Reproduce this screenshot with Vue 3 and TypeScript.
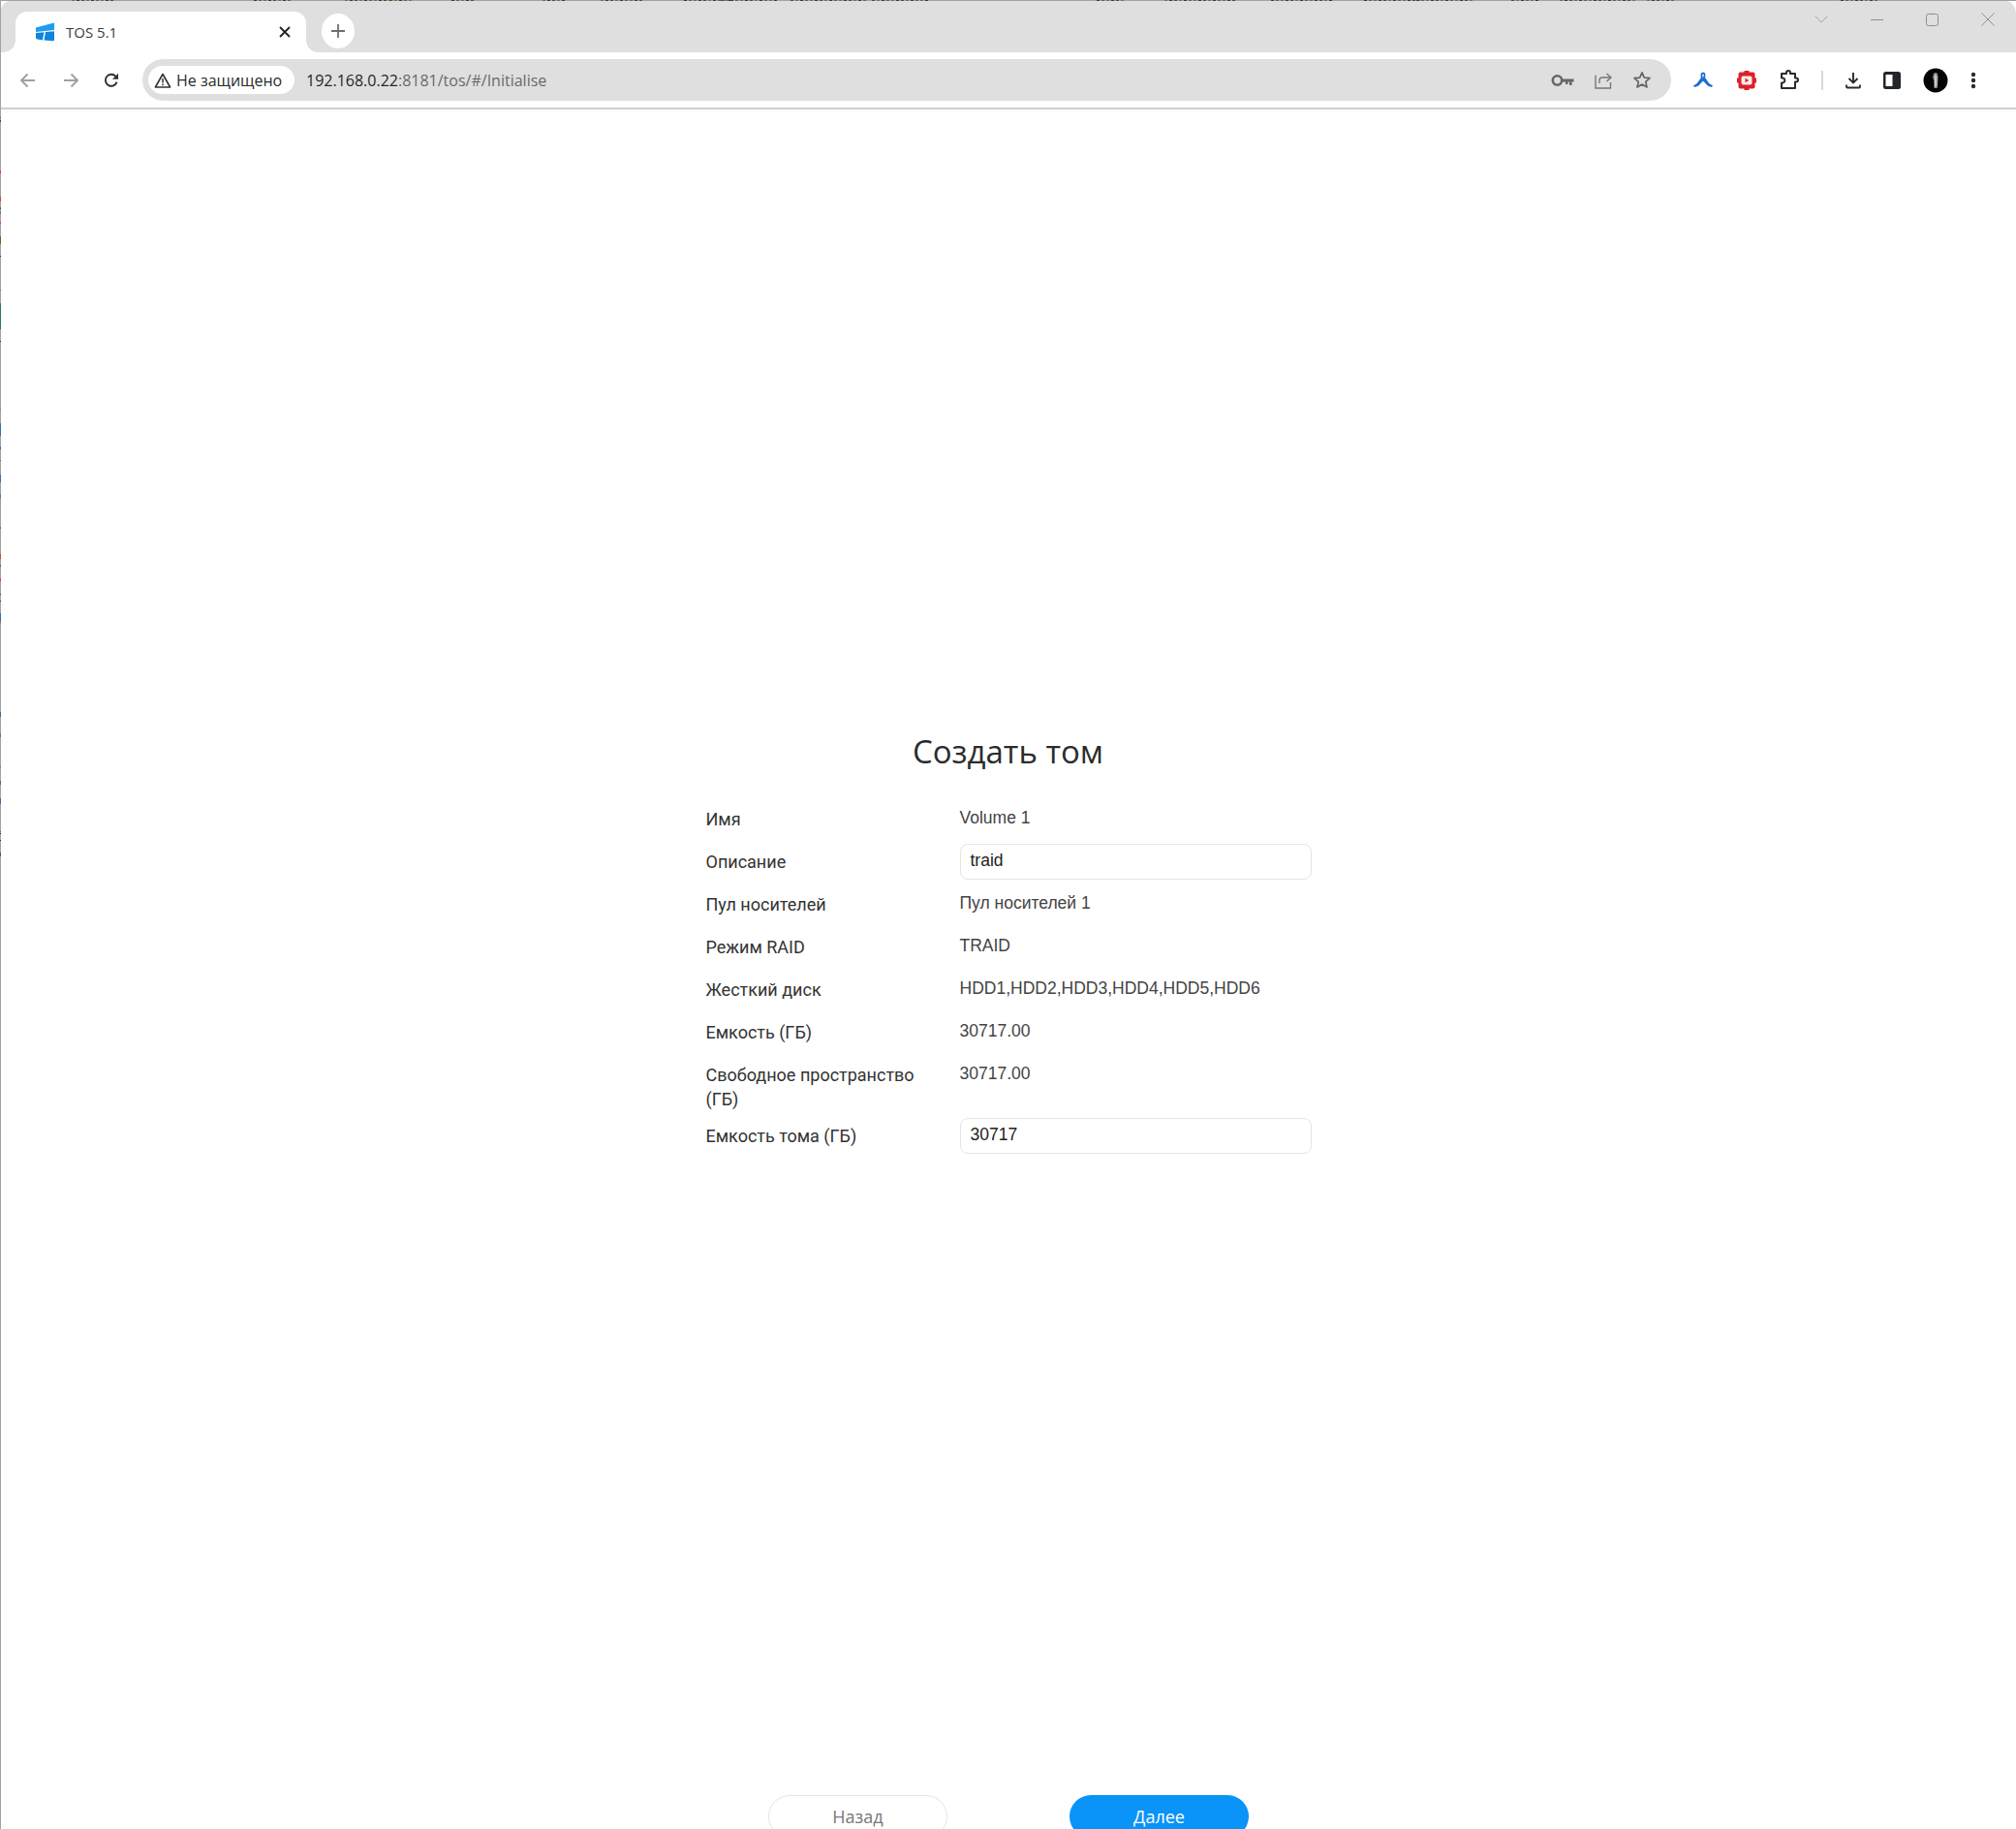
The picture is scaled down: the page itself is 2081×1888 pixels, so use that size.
<script setup lang="ts">
interface Mark { y: number; h: number; c: string }
interface TopMark { x: number; w: number; c: string }
const leftMarks: Mark[] = [
  { y: 120, h: 3, c: '#5b8f9c' }, { y: 124, h: 2, c: '#444' }, { y: 176, h: 3, c: '#d9452e' },
  { y: 203, h: 5, c: '#d9452e' }, { y: 214, h: 2, c: '#555' }, { y: 218, h: 3, c: '#777' },
  { y: 229, h: 2, c: '#d9452e' }, { y: 244, h: 8, c: '#8a5a1c' }, { y: 264, h: 1, c: '#333' },
  { y: 299, h: 1, c: '#777' }, { y: 313, h: 27, c: '#2e7d5b' }, { y: 352, h: 1, c: '#333' },
  { y: 422, h: 1, c: '#777' }, { y: 437, h: 13, c: '#3a6ea8' }, { y: 461, h: 3, c: '#3a6ea8' },
  { y: 475, h: 1, c: '#666' }, { y: 490, h: 8, c: '#3a6ea8' }, { y: 510, h: 5, c: '#4a86b8' },
  { y: 544, h: 2, c: '#d9452e' }, { y: 572, h: 5, c: '#d9452e' }, { y: 583, h: 2, c: '#666' },
  { y: 597, h: 3, c: '#d9452e' }, { y: 613, h: 1, c: '#333' }, { y: 620, h: 1, c: '#333' },
  { y: 633, h: 9, c: '#3a6ea8' }, { y: 642, h: 2, c: '#c27a2a' }, { y: 735, h: 5, c: '#2f6f95' },
  { y: 757, h: 4, c: '#3f7fb0' }, { y: 791, h: 1, c: '#666' }, { y: 806, h: 4, c: '#3a6ea8' },
  { y: 824, h: 6, c: '#3a6ea8' }, { y: 858, h: 1, c: '#666' }, { y: 860, h: 1, c: '#222' },
  { y: 867, h: 1, c: '#222' }, { y: 880, h: 4, c: '#7a3a86' }
]
const topColors = ['#5c4a32', '#2f3d4f', '#8a6a3a', '#46698a', '#3b3b3b', '#7f6d55']
const topGroups: [number, number][] = [
  [74, 44], [262, 40], [356, 50], [402, 24], [466, 24], [560, 24], [620, 44], [706, 50],
  [744, 60], [816, 80], [900, 60], [1132, 28], [1202, 72], [1312, 64], [1408, 60], [1462, 60],
  [1560, 30], [1610, 80], [1700, 30], [1900, 40]
]
const topMarks: TopMark[] = topGroups.flatMap(([x, w]) => {
  const out: TopMark[] = []
  for (let i = 0; i < w; i += 5) out.push({ x: x + i, w: 3, c: topColors[(x + i) % topColors.length] })
  return out
})
const rows = [
  { label: 'Имя', value: 'Volume 1' },
  { label: 'Описание', input: 'traid' },
  { label: 'Пул носителей', value: 'Пул носителей 1' },
  { label: 'Режим RAID', value: 'TRAID' },
  { label: 'Жесткий диск', value: 'HDD1,HDD2,HDD3,HDD4,HDD5,HDD6' },
  { label: 'Емкость (ГБ)', value: '30717.00' },
  { label: 'Свободное пространство (ГБ)', value: '30717.00' },
  { label: 'Емкость тома (ГБ)', input: '30717' }
]
</script>

<template>
  <div class="window">
    <header class="tabstrip">
      <div class="tab">
        <svg class="favicon" width="21" height="20" viewBox="0 0 21 20">
          <path d="M1 5.5 20 0.5V8L1 10Z" fill="#1e9cf0" />
          <path d="M1 11 9.5 10.2 8 18.5 2.5 17.5Q1 17 1 16Z" fill="#1083dc" />
          <path d="M11 10 20 9.2V18Q20 19.5 18.5 19.3L9.5 18.6Z" fill="#1083dc" />
        </svg>
        <span class="tab-title">TOS 5.1</span>
        <svg class="tab-close" width="12" height="12" viewBox="0 0 12 12">
          <path d="M1 1 11 11M11 1 1 11" stroke="#222" stroke-width="1.8" fill="none" />
        </svg>
      </div>
      <div class="new-tab">
        <svg width="16" height="16" viewBox="0 0 16 16">
          <path d="M8 1V15M1 8H15" stroke="#6f6f6f" stroke-width="1.8" fill="none" />
        </svg>
      </div>
      <div class="win-controls">
        <svg class="wc wc-chevron" width="14" height="8" viewBox="0 0 14 8"><path d="M.5.5 7 7 13.5.5" stroke="#a3a3a3" fill="none" /></svg>
        <svg class="wc wc-min" width="13" height="13" viewBox="0 0 13 13"><path d="M0 6.5H13" stroke="#8f8f8f" fill="none" /></svg>
        <svg class="wc wc-max" width="13" height="13" viewBox="0 0 13 13"><rect x=".5" y=".5" width="12" height="12" rx="2" stroke="#8f8f8f" fill="none" /></svg>
        <svg class="wc wc-close" width="14" height="14" viewBox="0 0 14 14"><path d="M.5.5 13.5 13.5M13.5.5.5 13.5" stroke="#8f8f8f" fill="none" /></svg>
      </div>
    </header>

    <nav class="toolbar">
      <svg class="nav" width="17" height="16" viewBox="0 0 17 16"><path d="M16 8H2M8.5 1.5 2 8l6.5 6.5" stroke="#a0a0a0" stroke-width="1.9" fill="none" /></svg>
      <svg class="nav" width="17" height="16" viewBox="0 0 17 16"><path d="M1 8H15M8.5 1.5 15 8l-6.5 6.5" stroke="#a0a0a0" stroke-width="1.9" fill="none" /></svg>
      <svg class="nav" width="16" height="16" viewBox="0 0 16 16">
        <path d="M13.6 9.6A6 6 0 1 1 12.4 3.8" stroke="#303030" stroke-width="1.9" fill="none" />
        <path d="M15 .8V6.8H9Z" fill="#303030" />
      </svg>
      <div class="omnibox">
        <div class="chip">
          <svg width="18" height="16" viewBox="0 0 18 16">
            <path d="M9 1.5 16.6 15H1.4Z" stroke="#333" stroke-width="1.6" fill="none" stroke-linejoin="round" />
            <path d="M9 6V10.5M9 11.6V13.2" stroke="#333" stroke-width="1.5" fill="none" />
          </svg>
          <span>Не защищено</span>
        </div>
        <div class="url">192.168.0.22<span class="url-rest">:8181/tos/#/Initialise</span></div>
        <div class="omni-icons">
          <svg width="24" height="14" viewBox="0 0 24 14">
            <circle cx="6.5" cy="7" r="4.7" stroke="#666" stroke-width="2.6" fill="none" />
            <path d="M11 5.5H23.5V8.6H21.5V12H19V8.6H17.5V11H15V8.6H11Z" fill="#666" />
          </svg>
          <svg width="18" height="18" viewBox="0 0 18 18">
            <path d="M1 3.5V17H16.5V11" stroke="#777" stroke-width="1.4" fill="none" />
            <path d="M5 12V9Q5 6 8 6H16M12.5 2 17 6l-4.5 4" stroke="#777" stroke-width="1.4" fill="none" />
          </svg>
          <svg width="20" height="19" viewBox="0 0 20 19">
            <path d="M10 1.8 12.3 7.1 18 7.6 13.7 11.4 15 17 10 14.1 5 17 6.3 11.4 2 7.6 7.7 7.1Z" stroke="#666" stroke-width="1.7" fill="none" stroke-linejoin="round" />
          </svg>
        </div>
      </div>
      <div class="ext">
        <svg width="22" height="20" viewBox="0 0 22 20">
          <path d="M11 1.5C8.6 1.5 8 4.5 9 7L4.8 13 1 15.6 2 17 6 15.8 11 10.4 16 15.8 20 17 21 15.6 17.2 13 13 7C14 4.5 13.4 1.5 11 1.5Z" fill="#1a6fd6" />
          <path d="M11 3.6C10 3.6 9.9 5.2 11 7 12.1 5.2 12 3.6 11 3.6Z" fill="#fff" />
        </svg>
        <svg width="22" height="22" viewBox="0 0 22 22">
          <path d="M6 2.5H8.5V1H13.5V2.5H17.5Q19.5 2.5 19.5 4.5V8.5H21V13.5H19.5V17.5Q19.5 19.5 17.5 19.5H13.5V21H8.5V19.5H4.5Q2.5 19.5 2.5 17.5V13.5H1V8.5H2.5V4.5Q2.5 2.5 4.5 2.5Z" fill="#dc2127" />
          <rect x="5.5" y="6.5" width="11" height="9" rx="2" fill="#f4eeee" />
          <path d="M9.5 8.8 13.3 11 9.5 13.2Z" fill="#dc2127" />
        </svg>
        <svg width="20" height="21" viewBox="0 0 20 21">
          <path d="M2 4H7V3A2 2 0 0 1 11 3V4H16V8.5H17A2 2 0 0 1 17 12.5H16V19H2V13.5H3.5A2.6 2.6 0 0 0 3.5 8.5H2Z" stroke="#2b2b2b" stroke-width="2" fill="none" stroke-linejoin="round" />
        </svg>
        <span class="divider"></span>
        <svg class="dl" width="16" height="18" viewBox="0 0 16 18">
          <path d="M8 1V11M3.5 7 8 11.5 12.5 7" stroke="#2b2b2b" stroke-width="1.9" fill="none" />
          <path d="M1 13.5V15.5Q1 16.5 2 16.5H14Q15 16.5 15 15.5V13.5" stroke="#2b2b2b" stroke-width="1.8" fill="none" />
        </svg>
        <svg width="18" height="18" viewBox="0 0 18 18">
          <rect width="18" height="18" rx="2.5" fill="#22252a" />
          <rect x="2.5" y="3" width="7" height="12" fill="#fff" />
        </svg>
        <svg width="26" height="26" viewBox="0 0 26 26">
          <circle cx="13" cy="13" r="12.5" fill="#050505" />
          <path d="M11 6Q13 4 15 6L15.5 10 14.8 21H11.5L11.2 13 10 10Z" fill="#8a8a8a" />
          <path d="M12.5 7V20M14 8V19" stroke="#d8d8d8" stroke-width="1" fill="none" />
        </svg>
        <svg class="kebab" width="6" height="18" viewBox="0 0 6 18">
          <circle cx="3" cy="3" r="2.2" fill="#2b2b2b" /><circle cx="3" cy="9" r="2.2" fill="#2b2b2b" /><circle cx="3" cy="15" r="2.2" fill="#2b2b2b" />
        </svg>
      </div>
    </nav>

    <main class="page">
      <h1 class="title">Создать том</h1>
      <div class="form">
        <div v-for="row in rows" :key="row.label" class="row">
          <div class="label">{{ row.label }}</div>
          <div v-if="row.input" class="input">{{ row.input }}</div>
          <div v-else class="value">{{ row.value }}</div>
        </div>
      </div>
      <div class="actions">
        <button class="btn btn-back">Назад</button>
        <button class="btn btn-next">Далее</button>
      </div>
    </main>

    <div class="edge-left">
      <i v-for="m in leftMarks" :key="m.y" :style="{ top: m.y + 'px', height: m.h + 'px', background: m.c }"></i>
    </div>
    <div class="edge-top">
      <i v-for="m in topMarks" :key="m.x" :style="{ left: m.x + 'px', width: m.w + 'px', background: m.c }"></i>
    </div>
  </div>
</template>

<style>
html, body { margin: 0; background: #fff; }
</style>

<style scoped>
.window {
  position: relative;
  width: 2081px;
  height: 1888px;
  overflow: hidden;
  display: flex;
  flex-direction: column;
  background: #fff;
  font-family: "Open Sans", "Noto Sans", sans-serif;
}
.tabstrip {
  height: 54px;
  flex: none;
  display: flex;
  align-items: flex-end;
  background: #dfdfdf;
  padding-left: 16px;
  box-sizing: border-box;
  border-radius: 14px 14px 0 0;
}
.tab {
  position: relative;
  width: 300px;
  height: 42px;
  background: #fff;
  border-radius: 12px 12px 0 0;
  display: flex;
  align-items: center;
  padding: 0 16px 0 20px;
  box-sizing: border-box;
}
.tab::before, .tab::after {
  content: "";
  position: absolute;
  bottom: 0;
  width: 12px;
  height: 12px;
  background: radial-gradient(circle at 0 0, #dfdfdf 11.5px, #fff 12px);
}
.tab::before { left: -12px; transform: scaleX(1); }
.tab::after { right: -12px; transform: scaleX(-1); }
.tab::before { background: radial-gradient(circle at 0 0, #dfdfdf 11.5px, #fff 12px); }
.tab::after { background: radial-gradient(circle at 0 0, #dfdfdf 11.5px, #fff 12px); }
.favicon { flex: none; margin-right: 11px; }
.tab-title {
  flex: 1;
  font-size: 15px;
  color: #3c3c3c;
}
.tab-close { flex: none; }
.new-tab {
  width: 34px;
  height: 36px;
  border-radius: 50%;
  background: #fff;
  margin: 0 0 4px 16px;
  display: flex;
  align-items: center;
  justify-content: center;
  align-self: flex-end;
}
.win-controls {
  margin-left: auto;
  align-self: flex-start;
  display: flex;
  align-items: center;
  height: 40px;
  padding-right: 22px;
}
.wc { display: block; flex: none; }
.wc-min { margin-left: 44px; }
.wc-max { margin-left: 44px; }
.wc-close { margin-left: 44px; }
.toolbar {
  height: 59px;
  flex: none;
  display: flex;
  align-items: center;
  box-sizing: border-box;
  border-bottom: 2px solid #cfcfcf;
  padding-left: 20px;
  background: #fff;
}
.nav { flex: none; margin-right: 28px; }
.nav:nth-child(3) { margin-right: 24px; margin-left: -3px; }
.omnibox {
  width: 1578px;
  height: 43px;
  flex: none;
  border-radius: 22px;
  background: #dfdfdf;
  display: flex;
  align-items: center;
  padding-left: 6px;
  box-sizing: border-box;
}
.chip {
  height: 29px;
  width: 151px;
  border-radius: 15px;
  background: #fff;
  display: flex;
  align-items: center;
  gap: 5px;
  padding-left: 6px;
  box-sizing: border-box;
  font-size: 16px;
  color: #2b2b2b;
  white-space: nowrap;
}
.url {
  margin-left: 12px;
  font-size: 16px;
  color: #262626;
  white-space: nowrap;
}
.url-rest { color: #6a6a6a; }
.omni-icons {
  margin-left: auto;
  display: flex;
  align-items: center;
  gap: 21px;
  padding-right: 20px;
}
.ext {
  display: flex;
  align-items: center;
  padding-left: 22px;
}
.ext > svg { flex: none; margin-right: 23px; }
.divider {
  width: 2px;
  height: 20px;
  background: #d8d8d8;
  margin: 0 23px 0 0;
}
.page {
  flex: 1;
  position: relative;
  display: flex;
  flex-direction: column;
  align-items: center;
  min-height: 0;
}
.title {
  margin: 640px 0 0;
  font-size: 33px;
  line-height: 46px;
  font-weight: 400;
  color: #2c2c2c;
}
.form {
  width: 625px;
  margin-top: 28px;
  padding-left: 1px;
}
.row {
  display: flex;
  align-items: flex-start;
  margin-bottom: 7px;
  min-height: 37px;
}
.label {
  width: 240px;
  margin-right: 22px;
  flex: none;
  font-family: Roboto, "Noto Sans", sans-serif;
  font-size: 18px;
  line-height: 25px;
  padding-top: 6px;
  color: #333;
}
.value {
  font-family: "Liberation Sans", Arial, sans-serif;
  font-size: 17.5px;
  line-height: 25px;
  padding-top: 5px;
  color: #444;
}
.input {
  width: 363px;
  height: 37px;
  box-sizing: border-box;
  border: 1px solid #e4e4e4;
  border-radius: 8px;
  padding-left: 10px;
  font-family: "Liberation Sans", Arial, sans-serif;
  font-size: 17.5px;
  line-height: 33px;
  color: #222;
}
.actions {
  position: absolute;
  top: 1740px;
  left: 793px;
  display: flex;
  gap: 126px;
}
.btn {
  width: 185px;
  height: 44px;
  border-radius: 22px;
  font-family: "Open Sans", sans-serif;
  font-size: 18px;
  box-sizing: border-box;
  padding: 0;
}
.btn-back { background: #fff; border: 1px solid #e4e4e4; color: #777; }
.btn-next { background: #0a93f8; border: 0; color: #fff; font-weight: 500; }
.edge-left {
  position: absolute;
  left: 0;
  top: 0;
  width: 1px;
  height: 1888px;
  background: #a3a3a3;
}
.edge-left i { position: absolute; left: 0; width: 1px; display: block; }
.edge-top {
  position: absolute;
  left: 0;
  top: 0;
  width: 2081px;
  height: 1px;
  background: #a3a3a3;
}
.edge-top i { position: absolute; top: 0; height: 1px; display: block; }
</style>
